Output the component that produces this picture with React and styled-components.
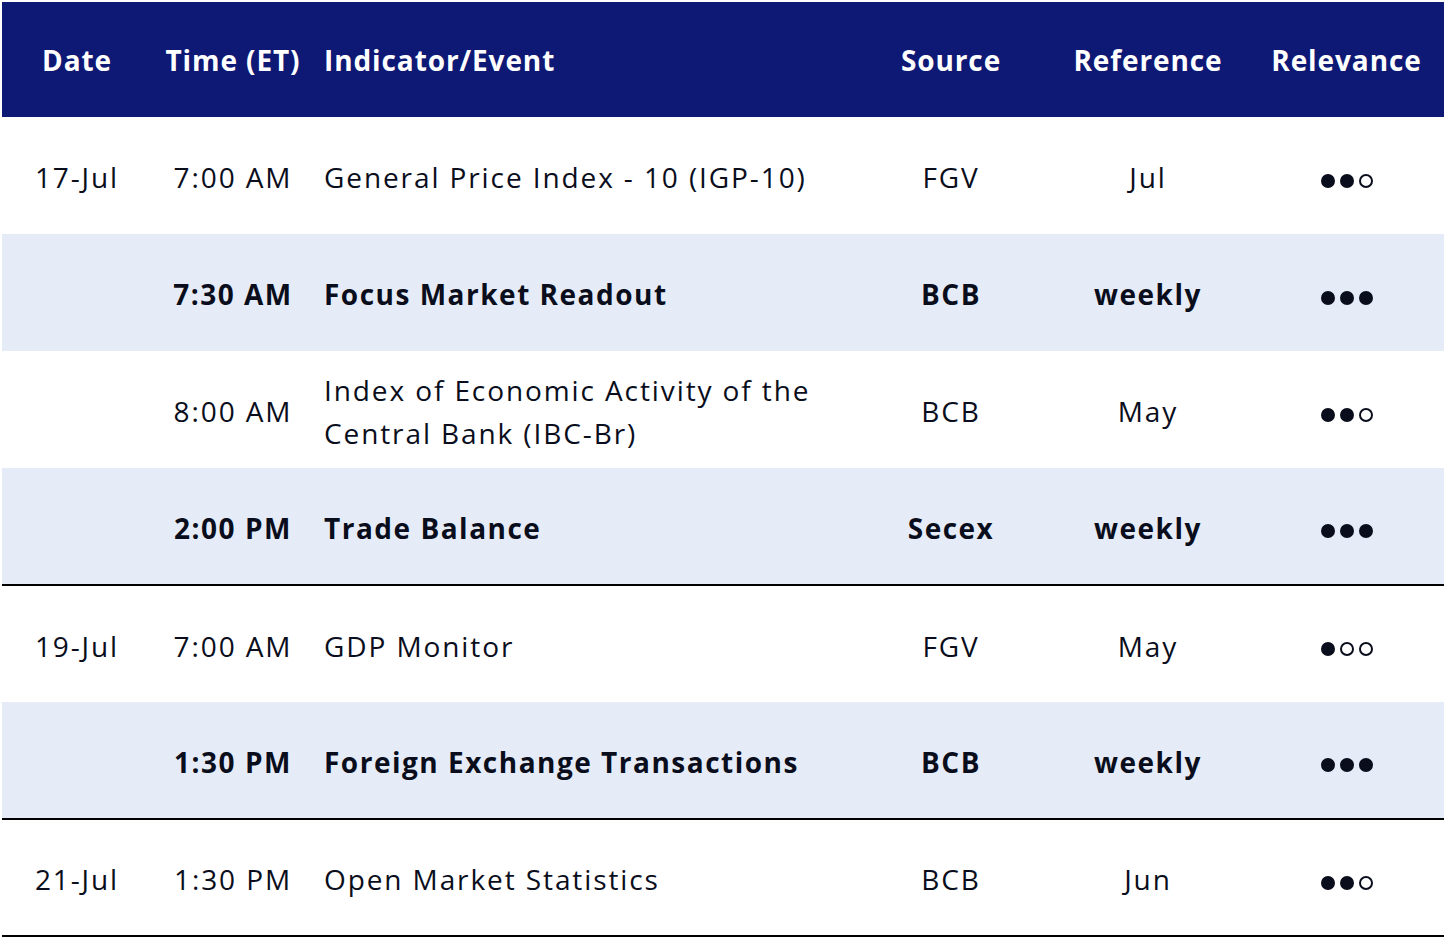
import React from "react";
import styled, { createGlobalStyle } from "styled-components";

const GlobalStyle = createGlobalStyle`
  body {
    margin: 0;
    padding: 2px;
    background: #ffffff;
    font-family: "Open Sans", "Liberation Sans", sans-serif;
    color: #0a0e1c;
  }
`;

const Table = styled.table`
  width: 1442px;
  border-collapse: collapse;
  table-layout: fixed;
  font-size: 28px;
`;

const HeadRow = styled.tr`
  background: #0e1875;
  height: 115px;
`;

const HeadCell = styled.th`
  color: #ffffff;
  font-weight: 700;
  letter-spacing: 0.9px;
  text-align: ${(p) => p.$align || "center"};
  padding: 0;
  padding-left: ${(p) => (p.$align === "left" ? "10px" : "0")};
  white-space: nowrap;
`;

const Row = styled.tr`
  height: 117px;
  background: ${(p) => (p.$shaded ? "#e6ecf7" : "#ffffff")};
  border-bottom: ${(p) => (p.$groupEnd ? "2px solid #000000" : "none")};
  font-weight: ${(p) => (p.$bold ? 700 : 400)};
  letter-spacing: ${(p) => (p.$bold ? "1.5px" : "1.9px")};
`;

const Cell = styled.td`
  text-align: ${(p) => p.$align || "center"};
  padding: 0;
  padding-left: ${(p) => (p.$align === "left" ? "10px" : "0")};
  padding-right: ${(p) => (p.$align === "left" ? "40px" : "0")};
  padding-top: 4px;
  line-height: 43px;
  vertical-align: middle;
  white-space: ${(p) => (p.$align === "left" ? "normal" : "nowrap")};
`;

const Dots = styled.span`
  display: inline-flex;
  gap: 5px;
  align-items: center;
  vertical-align: middle;
`;

const Dot = styled.span`
  width: 14px;
  height: 14px;
  box-sizing: border-box;
  border-radius: 50%;
  border: 2px solid #0a0e1c;
  background: ${(p) => (p.$filled ? "#0a0e1c" : "transparent")};
`;

const rows = [
  { date: "17-Jul", time: "7:00 AM", event: "General Price Index - 10 (IGP-10)", source: "FGV", ref: "Jul", rel: 2 },
  { date: "", time: "7:30 AM", event: "Focus Market Readout", source: "BCB", ref: "weekly", rel: 3, bold: true, shaded: true },
  { date: "", time: "8:00 AM", event: "Index of Economic Activity of the Central Bank (IBC-Br)", source: "BCB", ref: "May", rel: 2 },
  { date: "", time: "2:00 PM", event: "Trade Balance", source: "Secex", ref: "weekly", rel: 3, bold: true, shaded: true, groupEnd: true },
  { date: "19-Jul", time: "7:00 AM", event: "GDP Monitor", source: "FGV", ref: "May", rel: 1 },
  { date: "", time: "1:30 PM", event: "Foreign Exchange Transactions", source: "BCB", ref: "weekly", rel: 3, bold: true, shaded: true, groupEnd: true },
  { date: "21-Jul", time: "1:30 PM", event: "Open Market Statistics", source: "BCB", ref: "Jun", rel: 2, groupEnd: true },
];

function Relevance({ level }) {
  return (
    <Dots>
      {[0, 1, 2].map((i) => (
        <Dot key={i} $filled={i < level} />
      ))}
    </Dots>
  );
}

export default function App() {
  return (
    <>
      <GlobalStyle />
      <Table>
        <colgroup>
          <col style={{ width: 150 }} />
          <col style={{ width: 162 }} />
          <col style={{ width: 541 }} />
          <col style={{ width: 192 }} />
          <col style={{ width: 202 }} />
          <col style={{ width: 195 }} />
        </colgroup>
        <thead>
          <HeadRow>
            <HeadCell>Date</HeadCell>
            <HeadCell>Time (ET)</HeadCell>
            <HeadCell $align="left">Indicator/Event</HeadCell>
            <HeadCell>Source</HeadCell>
            <HeadCell>Reference</HeadCell>
            <HeadCell>Relevance</HeadCell>
          </HeadRow>
        </thead>
        <tbody>
          {rows.map((r, i) => (
            <Row key={i} $bold={r.bold} $shaded={r.shaded} $groupEnd={r.groupEnd}>
              <Cell>{r.date}</Cell>
              <Cell>{r.time}</Cell>
              <Cell $align="left">{r.event}</Cell>
              <Cell>{r.source}</Cell>
              <Cell>{r.ref}</Cell>
              <Cell>
                <Relevance level={r.rel} />
              </Cell>
            </Row>
          ))}
        </tbody>
      </Table>
    </>
  );
}
